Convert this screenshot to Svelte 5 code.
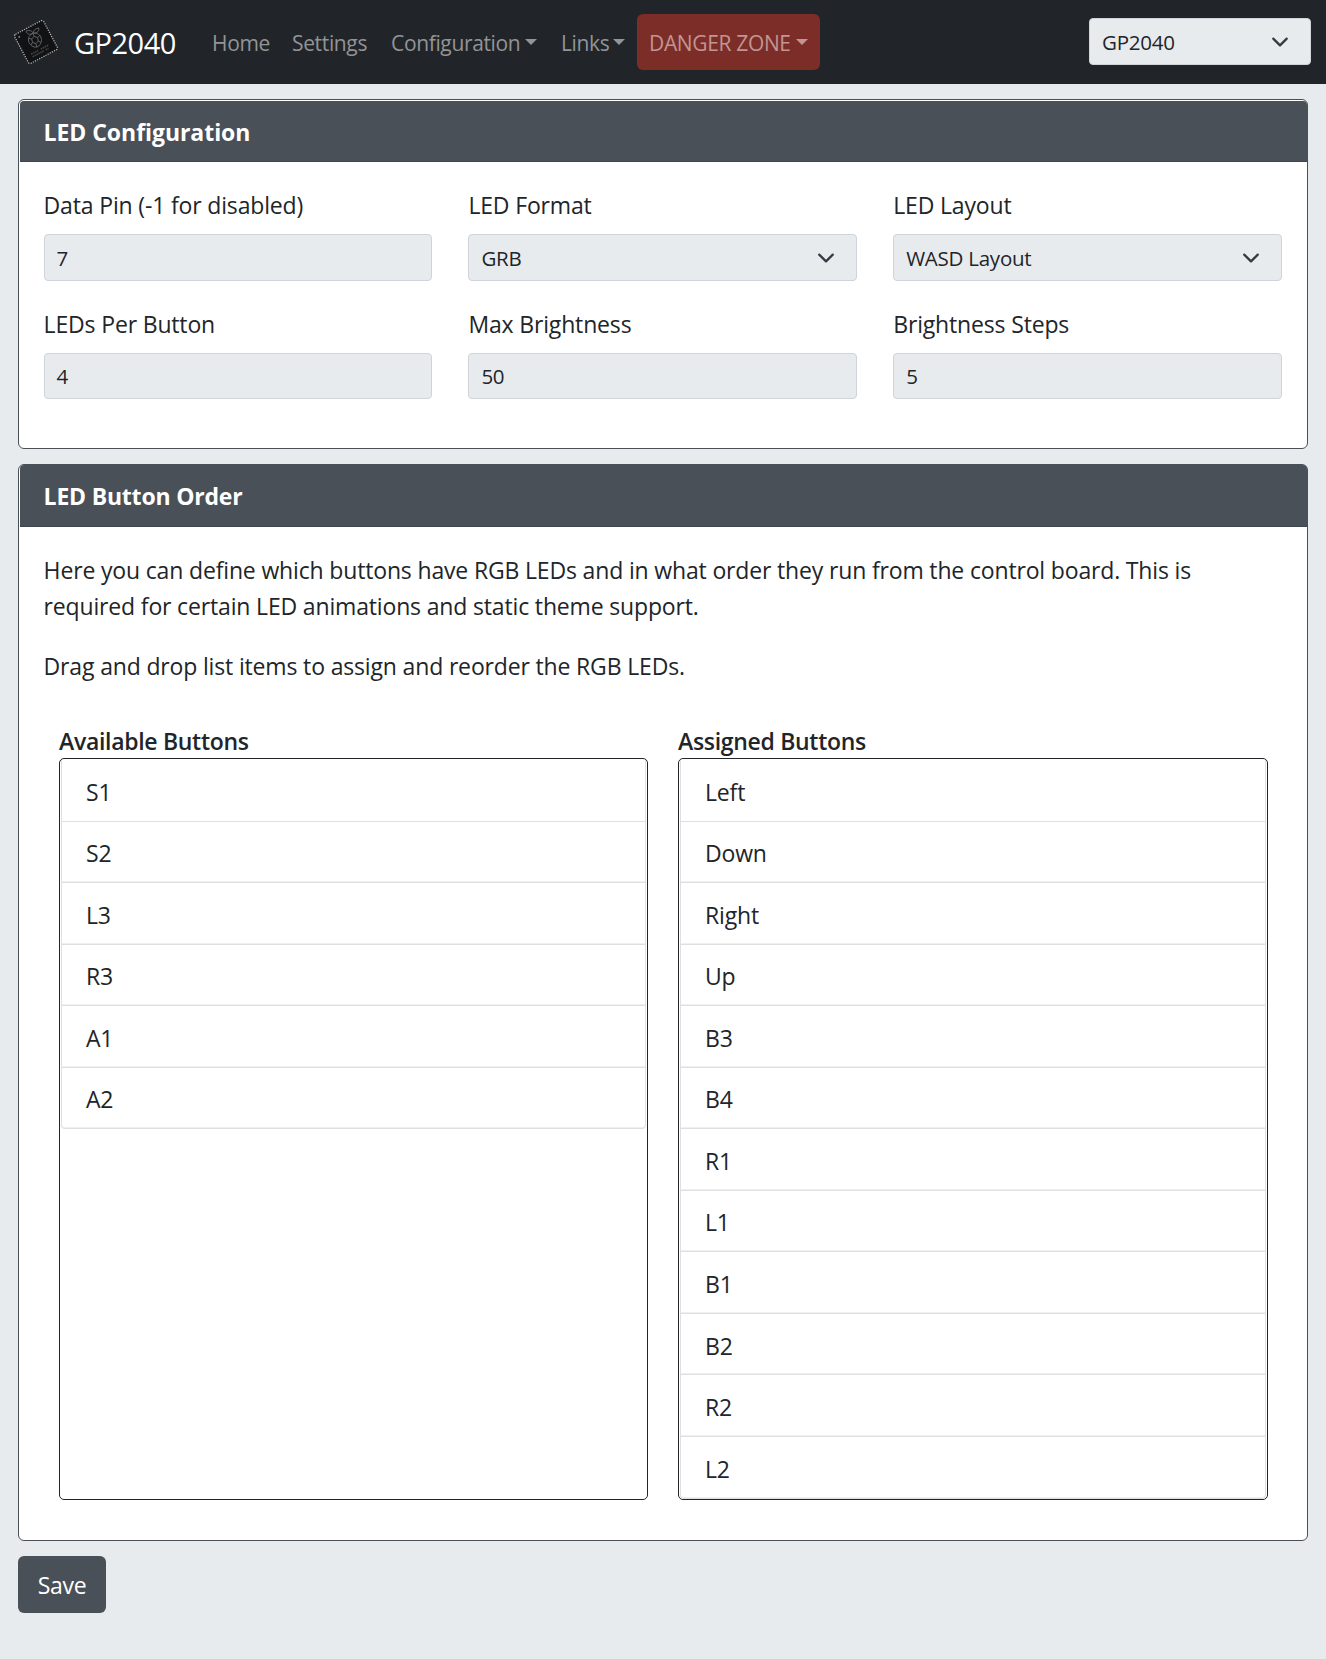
<script>
  const links = [
    { label: 'Home', cls: 'home' },
    { label: 'Settings', cls: 'settings' },
    { label: 'Configuration', cls: 'configuration', menu: true },
    { label: 'Links', cls: 'links', menu: true },
    { label: 'DANGER ZONE', cls: 'danger', menu: true }
  ];

  const fields = [
    { label: 'Data Pin (-1 for disabled)', value: '7' },
    { label: 'LED Format', value: 'GRB', select: true },
    { label: 'LED Layout', value: 'WASD Layout', select: true },
    { label: 'LEDs Per Button', value: '4' },
    { label: 'Max Brightness', value: '50' },
    { label: 'Brightness Steps', value: '5' }
  ];

  const lists = [
    { title: 'Available Buttons', items: ['S1', 'S2', 'L3', 'R3', 'A1', 'A2'] },
    {
      title: 'Assigned Buttons',
      items: ['Left', 'Down', 'Right', 'Up', 'B3', 'B4', 'R1', 'L1', 'B1', 'B2', 'R2', 'L2']
    }
  ];
</script>

{#snippet chevron()}
  <svg class="chevron" viewBox="0 0 16 16" aria-hidden="true">
    <path d="M2 5l6 6 6-6" fill="none" stroke="#343a40" stroke-width="2" stroke-linecap="round" stroke-linejoin="round" />
  </svg>
{/snippet}

<nav class="navbar">
  <svg class="logo" viewBox="0 0 44 44" aria-hidden="true">
    <g transform="rotate(-28 22 22)">
      <rect x="5.6" y="5.6" width="32.8" height="32.8" rx="2" fill="#111213" />
      <rect x="5.6" y="5.6" width="32.8" height="32.8" rx="2" fill="none" stroke="#b4b6b7" stroke-width="1.3" stroke-dasharray="1.2 1.2" />
      <circle cx="9.6" cy="9.6" r="1" fill="#777" />
      <g transform="rotate(14 22 20)" fill="none" stroke="#626365" stroke-width="0.9">
        <path d="M22 12.5c-1-3-4-4-6.500-3.500 0 3 2.500 5 6.500 3.500zM22 12.500c1-3 4-4 6.500-3.500 0 3-2.500 5-6.500 3.500z" />
        <path d="M22 13c4 0 6.500 3 6.500 6.500S25.500 27 22 27s-6.500-4-6.500-7.500S18 13 22 13z" />
        <path d="M22 16l3 2v3.500l-3 2-3-2V18zM22 13v3M25 18l3-1.500M19 18l-3-1.500M25 21.500l2 2M19 21.500l-2 2M22 23.500V27" />
      </g>
      <path d="M12 30.500h8M23 30.500h9M12 33.500h13M27 33.500h3" stroke="#454648" stroke-width="1.600" stroke-dasharray="1.500 .7" />
    </g>
  </svg>
  <span class="brand">GP2040</span>
  <div class="nav-links">
    {#each links as link}
      <span class="nav-link {link.cls}">
        <span class="nav-text">{link.label}</span>
        {#if link.menu}<i class="caret"></i>{/if}
      </span>
    {/each}
  </div>
  <div class="control board-select"><span>GP2040</span>{@render chevron()}</div>
</nav>

<main>
  <section class="card config">
    <h2 class="card-header">LED Configuration</h2>
    <div class="card-body fields">
      {#each fields as field}
        <div class="field">
          <span class="label">{field.label}</span>
          <div class="control">
            <span>{field.value}</span>
            {#if field.select}{@render chevron()}{/if}
          </div>
        </div>
      {/each}
    </div>
  </section>

  <section class="card order">
    <h2 class="card-header">LED Button Order</h2>
    <div class="card-body">
      <p>
        Here you can define which buttons have RGB LEDs and in what order they run from the control board. This is
        <br />required for certain LED animations and static theme support.
      </p>
      <p>Drag and drop list items to assign and reorder the RGB LEDs.</p>
      <div class="lists">
        {#each lists as list}
          <div class="list-column">
            <h3>{list.title}</h3>
            <ul>
              {#each list.items as item}
                <li>{item}</li>
              {/each}
            </ul>
          </div>
        {/each}
      </div>
    </div>
  </section>

  <button type="button">Save</button>
</main>

<style>
  :global(body) {
    background: #e8ebee;
    color: #212529;
    font-family: 'Open Sans', 'Noto Sans', sans-serif;
    font-size: 23px;
    letter-spacing: -0.16px;
    line-height: 36px;
  }

  .navbar {
    display: flex;
    align-items: center;
    box-sizing: border-box;
    height: 84px;
    padding: 0 15px 0 14px;
    background: #212529;
  }

  .logo {
    width: 44px;
    height: 44px;
  }

  .brand {
    width: 126px;
    margin-left: 16px;
    padding-top: 2px;
    color: #fff;
    font-size: 29px;
    letter-spacing: -0.5px;
    white-space: nowrap;
  }

  .nav-links {
    display: flex;
    flex: 1;
    font-size: 21px;
    letter-spacing: -0.35px;
    white-space: nowrap;
  }

  .nav-link {
    display: flex;
    align-items: center;
    justify-content: space-between;
    box-sizing: border-box;
    height: 56px;
    padding: 0 12px;
    color: #929496;
  }

  .nav-text {
    padding-top: 1px;
  }

  .home { width: 80px; }
  .settings { width: 99px; }
  .configuration { width: 170px; }
  .links { width: 88px; }

  .danger {
    width: 183px;
    border-radius: 6px;
    background: #7d2d28;
    color: #c09592;
  }

  .caret {
    border: 6px solid transparent;
    border-top-color: currentColor;
    border-bottom: 0;
  }

  .control {
    display: flex;
    align-items: center;
    justify-content: space-between;
    box-sizing: border-box;
    height: 47px;
    padding: 0 21px 0 12px;
    border: 1px solid #ced4da;
    border-radius: 4px;
    background: #e8ebee;
    font-size: 20.5px;
    letter-spacing: -0.25px;
  }

  .chevron {
    width: 18px;
    height: 18px;
  }

  .board-select {
    width: 222px;
    margin-bottom: 1px;
  }

  main {
    display: flex;
    flex-direction: column;
    align-items: flex-start;
    gap: 15px;
    padding: 15px 18px;
  }

  .card {
    box-sizing: border-box;
    width: 100%;
    padding: 0 0 0 1px;
    border: 1px solid #495057;
    border-radius: 6px;
    background: #fff;
  }

  .config {
    height: 350px;
    padding-top: 1px;
  }

  .order {
    height: 1077px;
  }

  .card-header {
    box-sizing: border-box;
    height: 61px;
    margin: 0;
    padding: 12px 23.6px;
    border-bottom: 1px solid #3f454c;
    border-radius: 4px 4px 0 0;
    background: #495057;
    color: #fff;
    font-size: 23px;
    font-weight: 700;
    letter-spacing: -0.05px;
  }

  .config .card-header {
    padding-top: 13px;
  }

  .order .card-header {
    height: 62px;
    padding-top: 13px;
    letter-spacing: -0.2px;
  }

  .card-body {
    padding: 25px 25px 0 23.6px;
  }

  .fields {
    display: grid;
    grid-template-columns: repeat(3, 1fr);
    gap: 25px 36px;
  }

  .label {
    display: block;
    margin-bottom: 11px;
  }

  .field:nth-child(n + 4) .control {
    height: 46px;
  }

  p {
    margin: 0 0 24px;
    white-space: nowrap;
  }

  .lists {
    display: grid;
    grid-template-columns: 589px 590px;
    gap: 30px;
    padding: 18px 0 0 15.4px;
  }

  .list-column {
    display: flex;
    flex-direction: column;
  }

  h3 {
    margin: 0 0 1px;
    font-size: 23px;
    font-weight: 600;
    letter-spacing: -0.3px;
    line-height: 31px;
  }

  ul {
    box-sizing: border-box;
    height: 742px;
    margin: 0;
    padding: 1px 1px 0;
    border: 1px solid #212529;
    border-radius: 5px;
    list-style: none;
  }

  li {
    box-sizing: border-box;
    height: 61.55px;
    padding: 13.6px 24px 0;
    border: 1px solid #dfdfdf;
    border-top: 0;
  }

  li:not(:first-child) {
    box-shadow: inset 0 -1px #f0f0f0;
  }

  li:last-child {
    border-radius: 0 0 4px 4px;
  }

  button {
    width: 88px;
    height: 57px;
    padding: 0;
    border: 0;
    border-radius: 6px;
    background: #495057;
    color: #fff;
    font: inherit;
    letter-spacing: -0.3px;
  }
</style>
